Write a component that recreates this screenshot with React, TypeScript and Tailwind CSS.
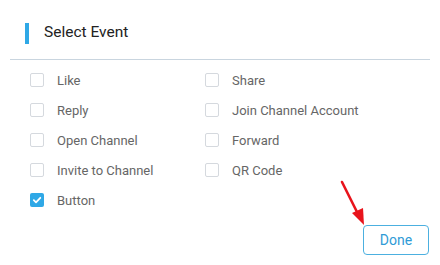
import React from 'react';

const left = [
  { label: 'Like', checked: false },
  { label: 'Reply', checked: false },
  { label: 'Open Channel', checked: false },
  { label: 'Invite to Channel', checked: false },
  { label: 'Button', checked: true },
];

const right = [
  { label: 'Share', checked: false },
  { label: 'Join Channel Account', checked: false },
  { label: 'Forward', checked: false },
  { label: 'QR Code', checked: false },
];

const Check: React.FC<{ label: string; checked: boolean }> = ({ label, checked }) => (
  <label className="flex items-center h-[30px] gap-[13px]">
    {checked ? (
      <span className="w-[14px] h-[14px] rounded-[2px] bg-[#2fa8e6] flex items-center justify-center">
        <svg width="10" height="10" viewBox="0 0 10 10">
          <path d="M1.8 5.2 L4 7.3 L8.3 2.8" stroke="white" strokeWidth="1.8" fill="none" strokeLinecap="round" strokeLinejoin="round" />
        </svg>
      </span>
    ) : (
      <span className="w-[14px] h-[14px] rounded-[2px] border border-[#d5d9de] bg-white" />
    )}
    <span className="text-[13px] text-[#666] leading-none">{label}</span>
  </label>
);

export default function App() {
  return (
    <div className="relative w-[440px] h-[265px] bg-white overflow-hidden" style={{ fontFamily: 'Roboto, "Liberation Sans", sans-serif' }}>
      {/* Header */}
      <div className="flex items-center h-[44px] mt-[11px] pl-[25px]">
        <div className="w-[4px] h-[21px] bg-[#2fa8e6]" />
        <h2 className="ml-[15px] text-[15.5px] text-[#222] font-normal leading-none">Select Event</h2>
      </div>
      <div className="ml-[10px] mr-[10px] mt-[4px] h-px bg-[#c9d5df]" />

      {/* Options */}
      <div className="flex pl-[30px] pt-[5px]">
        <div className="flex flex-col w-[175px]">
          {left.map((o) => (
            <Check key={o.label} {...o} />
          ))}
        </div>
        <div className="flex flex-col">
          {right.map((o) => (
            <Check key={o.label} {...o} />
          ))}
        </div>
      </div>

      {/* Footer */}
      <div className="flex justify-end pr-[11px] mt-[10px]">
        <button className="w-[66px] h-[30px] rounded-[4px] border border-[#4cb0e0] text-[#2f9bd6] text-[14px] bg-white">
          Done
        </button>
      </div>

      {/* Annotation arrow */}
      <svg className="absolute left-0 top-0 pointer-events-none" width="440" height="265">
        <line x1="342" y1="182" x2="357" y2="212" stroke="#e8141c" strokeWidth="2.6" strokeLinecap="round" />
        <polygon points="364,225 352,213 363,208" fill="#e8141c" />
      </svg>
    </div>
  );
}
